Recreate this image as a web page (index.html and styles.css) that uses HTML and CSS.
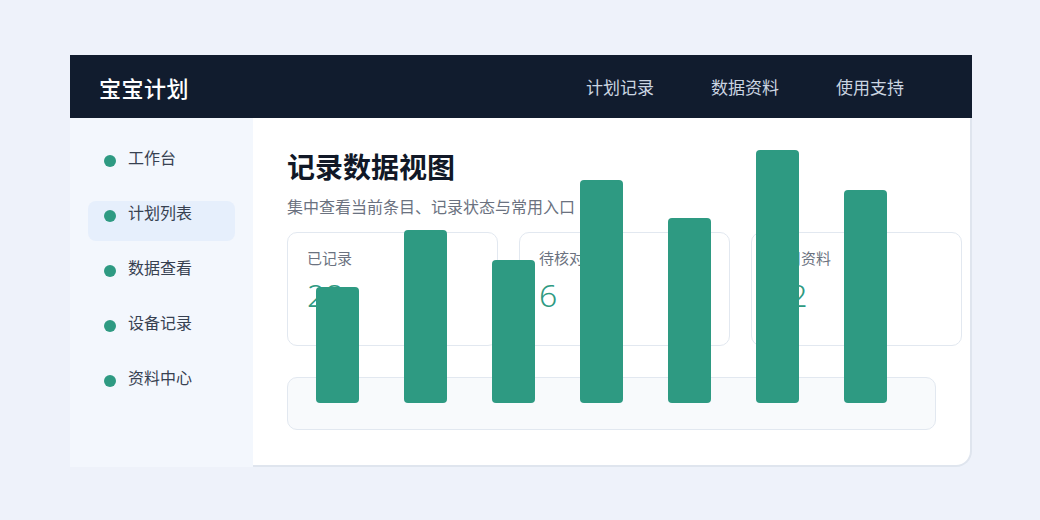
FILE: index.html
```
<!DOCTYPE html>
<html lang="zh-CN">
<head>
    <meta charset="UTF-8">
    <meta name="viewport" content="width=device-width, initial-scale=1.0">
    <title>宝宝计划</title>
    <link rel="stylesheet" href="styles.css">
</head>
<body>
    <div class="app">
        <header class="topbar">
            <div class="brand">宝宝计划</div>
            <nav class="nav">
                <a href="#">计划记录</a>
                <a href="#">数据资料</a>
                <a href="#">使用支持</a>
            </nav>
        </header>

        <div class="layout">
            <aside class="sidebar">
                <ul class="menu">
                    <li class="menu-item"><span class="dot"></span>工作台</li>
                    <li class="menu-item active"><span class="dot"></span>计划列表</li>
                    <li class="menu-item"><span class="dot"></span>数据查看</li>
                    <li class="menu-item"><span class="dot"></span>设备记录</li>
                    <li class="menu-item"><span class="dot"></span>资料中心</li>
                </ul>
            </aside>

            <main class="content">
                <h1 class="title">记录数据视图</h1>
                <p class="subtitle">集中查看当前条目、记录状态与常用入口</p>

                <div class="stats">
                    <div class="stat-card">
                        <div class="stat-label">已记录</div>
                        <div class="stat-value">28</div>
                    </div>
                    <div class="stat-card">
                        <div class="stat-label">待核对</div>
                        <div class="stat-value">6</div>
                    </div>
                    <div class="stat-card">
                        <div class="stat-label">常用资料</div>
                        <div class="stat-value">12</div>
                    </div>
                </div>

                <div class="chart">
                    <div class="bar" style="height: 116px"></div>
                    <div class="bar" style="height: 173px"></div>
                    <div class="bar" style="height: 143px"></div>
                    <div class="bar" style="height: 223px"></div>
                    <div class="bar" style="height: 185px"></div>
                    <div class="bar" style="height: 253px"></div>
                    <div class="bar" style="height: 213px"></div>
                </div>
            </main>
        </div>
    </div>
</body>
</html>
```

FILE: styles.css
```
* { box-sizing: border-box; }
body { margin: 0; padding: 55px 0 0 70px; background: #eef2fa; font-family: "Noto Sans", "Noto Sans CJK SC", sans-serif; }

.app { width: 902px; background: #fff; border-right: 2px solid #dfe5ee; border-bottom: 2px solid #dfe5ee; border-radius: 0 0 16px 0; }

.topbar { height: 63px; margin-right: -2px; padding: 0 68px 0 29px; background: #111c2e; display: flex; align-items: center; justify-content: space-between; }
.brand { color: #fff; font-size: 22px; font-weight: 500; letter-spacing: 0.5px; }
.nav { display: flex; gap: 57px; }
.nav a { color: #cbd5e1; font-size: 17px; text-decoration: none; }

.layout { display: grid; grid-template-columns: 183px minmax(0, 1fr); height: 347px; }

.sidebar { background: #f3f7fd; padding: 28px 18px; margin-bottom: -2px; }
.menu { list-style: none; margin: 0; padding: 0; display: flex; flex-direction: column; gap: 15px; }
.menu-item { height: 40px; padding: 0 16px; display: flex; align-items: flex-start; font-size: 16px; line-height: 24px; color: #374151; border-radius: 8px; }
.menu-item.active { background: #e6effc; }
.dot { width: 12px; height: 12px; margin: 9px 12px 0 0; border-radius: 50%; background: #2e9a82; flex: 0 0 12px; }

.content { min-width: 0; padding: 32px 34px 0; }
.title { margin: 0; font-size: 28px; line-height: 34px; font-weight: 600; color: #111827; }
.subtitle { margin: 12px 0 0; font-size: 16px; line-height: 22px; color: #6b7280; }

.stats { display: flex; gap: 21px; margin-top: 14px; }
.stat-card { flex: 0 0 211px; height: 114px; padding: 17px 19px; background: #fff; border: 1px solid #e2e8f0; border-radius: 10px; }
.stat-label { font-size: 15px; line-height: 16px; color: #6b7280; }
.stat-value { margin-top: 9px; font-size: 32px; line-height: 40px; font-weight: 300; color: #2e9a82; }

.chart { height: 53px; margin-top: 31px; padding: 0 28px 26px; display: flex; align-items: flex-end; gap: 45px; background: #f8fafc; border: 1px solid #e2e8f0; border-radius: 10px; }
.bar { flex: 0 0 43px; background: #2e9a82; border-radius: 4px; }
```
